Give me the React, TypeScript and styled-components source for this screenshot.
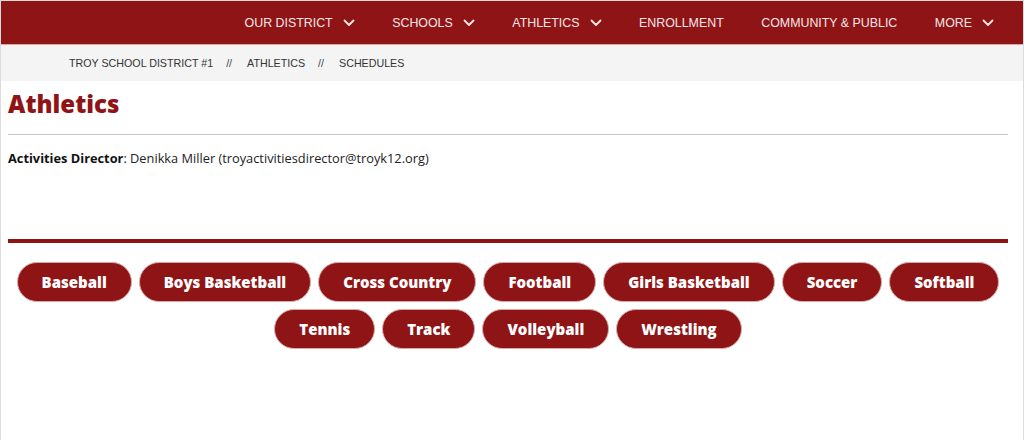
import React from 'react';
import styled, { createGlobalStyle } from 'styled-components';

const GlobalStyle = createGlobalStyle`
  html, body {
    margin: 0;
    padding: 0;
    background: #ffffff;
  }
  body {
    font-family: "Open Sans", "Liberation Sans", sans-serif;
  }
`;

const Page = styled.div`
  min-height: 440px;
  box-sizing: border-box;
  border: 1px solid #dcdcdc;
  border-bottom: none;
`;

const NavBar = styled.nav`
  height: 43px;
  background: #8f1416;
  border-bottom: 1px solid #e8a0a2;
  display: flex;
  justify-content: flex-end;
  align-items: center;
  padding-right: 29px;
`;

const NavItem = styled.div`
  display: flex;
  align-items: center;
  gap: 10px;
  margin-left: 37.5px;
  color: #f5e6e6;
  font-family: "Liberation Sans", Arial, sans-serif;
  font-size: 12.4px;
  text-transform: uppercase;
`;

const Chevron = () => (
  <svg width="12" height="8" viewBox="0 0 12 8" fill="none">
    <path d="M1.5 1.5 L6 6 L10.5 1.5" stroke="#f5e6e6" strokeWidth="1.8" strokeLinecap="round" strokeLinejoin="round" />
  </svg>
);

const Breadcrumbs = styled.div`
  height: 36px;
  background: #f4f4f4;
  display: flex;
  align-items: center;
  padding-left: 68px;
  gap: 13px;
  font-family: "Liberation Sans", Arial, sans-serif;
  font-size: 10.7px;
  color: #333333;
  text-transform: uppercase;
`;

const Crumb = styled.span``;

const Sep = styled.span`
  color: #444444;
  margin: 0 2px 0 0;
`;

const Content = styled.main`
  padding: 0 15px 0 7px;
`;

const Title = styled.h1`
  margin: 9px 0 0;
  font-family: "Open Sans", "Liberation Sans", sans-serif;
  font-weight: 800;
  font-size: 24px;
  color: #8f1416;
  line-height: 28px;
`;

const Rule = styled.hr`
  margin: 16px 0 0;
  border: none;
  border-top: 1px solid #c8c8c8;
`;

const Director = styled.p`
  margin: 15px 0 0;
  font-family: "Open Sans", "Liberation Sans", sans-serif;
  font-size: 12.8px;
  color: #222222;
  line-height: 16px;
`;

const Strong = styled.strong`
  font-weight: 700;
  color: #111111;
`;

const RedRule = styled.div`
  margin-top: 73px;
  height: 4px;
  background: #8f1416;
`;

const ButtonGrid = styled.div`
  display: flex;
  flex-wrap: wrap;
  justify-content: center;
  gap: 7px;
  margin-top: 19px;
`;

const SportButton = styled.button`
  height: 40px;
  padding: 0 24px;
  border-radius: 20px;
  border: 1px solid #d9a9aa;
  background: #8f1416;
  color: #ffffff;
  font-family: "Open Sans", "Liberation Sans", sans-serif;
  font-weight: 800;
  font-size: 15px;
  cursor: pointer;
`;

const navItems = [
  { label: 'Our District', menu: true },
  { label: 'Schools', menu: true },
  { label: 'Athletics', menu: true },
  { label: 'Enrollment', menu: false },
  { label: 'Community & Public', menu: false },
  { label: 'More', menu: true },
];

const sports = [
  'Baseball',
  'Boys Basketball',
  'Cross Country',
  'Football',
  'Girls Basketball',
  'Soccer',
  'Softball',
  'Tennis',
  'Track',
  'Volleyball',
  'Wrestling',
];

const App: React.FC = () => {
  return (
    <Page>
      <GlobalStyle />
      <NavBar>
        {navItems.map((item) => (
          <NavItem key={item.label}>
            {item.label}
            {item.menu && <Chevron />}
          </NavItem>
        ))}
      </NavBar>

      <Breadcrumbs>
        <Crumb>Troy School District #1</Crumb>
        <Sep>//</Sep>
        <Crumb>Athletics</Crumb>
        <Sep>//</Sep>
        <Crumb>Schedules</Crumb>
      </Breadcrumbs>

      <Content>
        <Title>Athletics</Title>
        <Rule />
        <Director>
          <Strong>Activities Director</Strong>: Denikka Miller (troyactivitiesdirector@troyk12.org)
        </Director>
        <RedRule />
        <ButtonGrid>
          {sports.map((sport) => (
            <SportButton key={sport}>{sport}</SportButton>
          ))}
        </ButtonGrid>
      </Content>
    </Page>
  );
};

export default App;
